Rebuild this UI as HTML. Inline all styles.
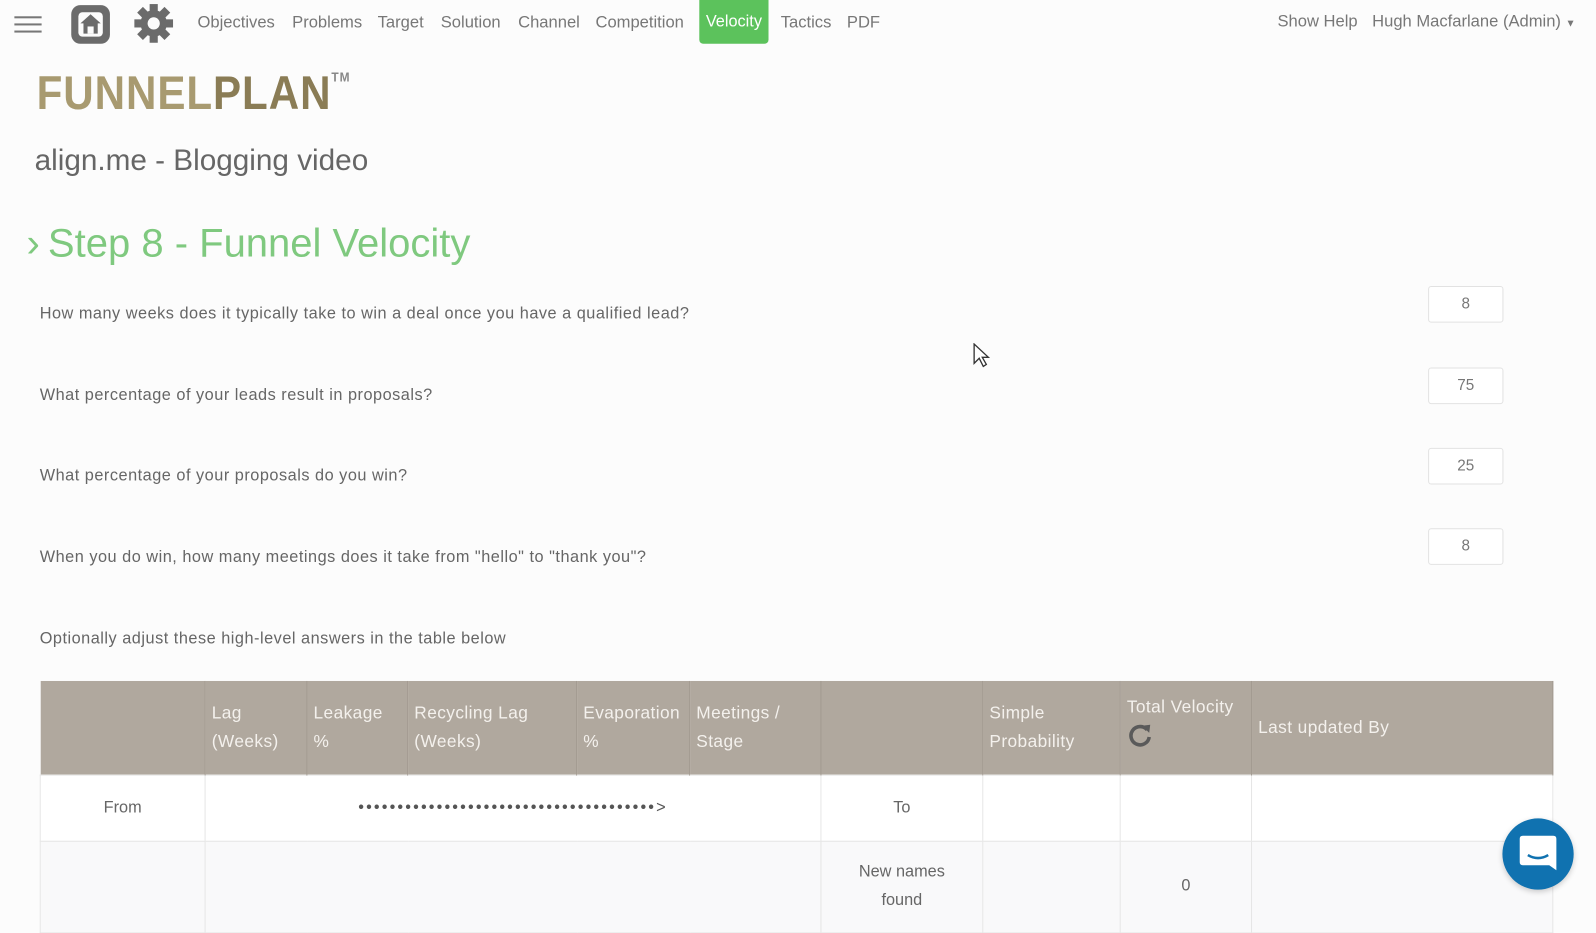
<!DOCTYPE html>
<html><head><meta charset="utf-8"><style>
*{margin:0;padding:0;box-sizing:border-box}
body{width:1596px;height:911px;overflow:hidden;background:#fcfcfc;font-family:"Liberation Sans",sans-serif;color:#666;position:relative}
#w{position:absolute;left:0;top:0;width:1568px;height:895px;transform:scale(1.0179);transform-origin:0 0}
.a{position:absolute;white-space:nowrap}
.nav{font-size:16.3px;color:#777;top:13px}
.q{font-size:16px;letter-spacing:0.5px;color:#666;left:39px}
.box{position:absolute;left:1403px;width:74px;height:36px;border:1px solid #e2e2e2;border-radius:3px;background:#fff;text-align:center;line-height:34px;font-size:15px;color:#777}
table{position:absolute;left:39px;top:669px;border-collapse:collapse;width:1487px}
th{background:#b0a89e;color:#f4f1ed;font-weight:normal;text-align:left;font-size:17px;letter-spacing:0.4px;line-height:28px;padding:0 6px;border-right:1px solid #a39b91;height:92px;vertical-align:middle}
td{border:1px solid #e6e6e6;font-size:16px;color:#666;text-align:center;background:#fff}
</style></head><body><div id="w">
<svg class="a" style="left:14px;top:15px" width="27" height="20"><rect y="1" width="27" height="2" fill="#777"/><rect y="8" width="27" height="2" fill="#777"/><rect y="15" width="27" height="2" fill="#777"/></svg>
<svg class="a" style="left:68px;top:3px" width="42" height="42" viewBox="0 0 42 42"><rect x="2" y="2" width="38" height="38" rx="9" fill="#6b6b6b"/><rect x="9" y="9" width="24" height="24" rx="4" fill="#fcfcfc"/><path d="M21 11 L31 20 H28 V30 H14 V20 H11 Z" fill="#6b6b6b"/><rect x="18" y="23" width="6" height="7" fill="#fcfcfc"/></svg>
<svg class="a" style="left:131px;top:3px" width="40" height="40" viewBox="0 0 40 40"><g fill="#6b6b6b"><circle cx="20" cy="20" r="13"/><rect x="16" y="1" width="8" height="38"/><rect x="1" y="16" width="38" height="8"/><rect x="16" y="1" width="8" height="38" transform="rotate(45 20 20)"/><rect x="16" y="1" width="8" height="38" transform="rotate(-45 20 20)"/></g><circle cx="20" cy="20" r="6" fill="#fcfcfc"/></svg>
<div class="a nav" style="left:194px">Objectives</div>
<div class="a nav" style="left:287px">Problems</div>
<div class="a nav" style="left:371px">Target</div>
<div class="a nav" style="left:433px">Solution</div>
<div class="a nav" style="left:509px">Channel</div>
<div class="a nav" style="left:585px">Competition</div>
<div class="a" style="left:687px;top:0;width:68px;height:43px;background:#5cc25c;border-radius:0 0 4px 4px;color:#fff;font-size:16px;text-align:center;line-height:44px">Velocity</div>
<div class="a nav" style="left:767px">Tactics</div>
<div class="a nav" style="left:832px">PDF</div>
<div class="a nav" style="left:1255px;top:12px;font-size:16.3px">Show Help</div>
<div class="a nav" style="left:1348px;top:12px;font-size:16.3px">Hugh Macfarlane (Admin) <span style="font-size:10px">▼</span></div>
<div class="a" style="left:36px;top:64px;font-size:46px;font-weight:bold;letter-spacing:1px;color:#a89a70;transform:scaleX(0.9);transform-origin:left">FUNNEL<span style="color:#8a7c55">PLAN</span><sup style="font-size:13px;vertical-align:top;position:relative;top:4px;color:#888">TM</sup></div>
<div class="a" style="left:34px;top:142px;font-size:29.2px;color:#666">align.me - Blogging video</div>
<div class="a" style="left:26px;top:217px;font-size:39.3px;color:#7fc97f">›<span style="margin-left:8px">Step 8 - Funnel Velocity</span></div>
<div class="a q" style="top:300px">How many weeks does it typically take to win a deal once you have a qualified lead?</div>
<div class="a q" style="top:380px">What percentage of your leads result in proposals?</div>
<div class="a q" style="top:459px">What percentage of your proposals do you win?</div>
<div class="a q" style="top:539px">When you do win, how many meetings does it take from "hello" to "thank you"?</div>
<div class="a q" style="top:619px">Optionally adjust these high-level answers in the table below</div>
<div class="box" style="top:281px">8</div>
<div class="box" style="top:361px">75</div>
<div class="box" style="top:440px">25</div>
<div class="box" style="top:519px">8</div>
<svg class="a" style="left:955px;top:337px" width="18" height="24"><path d="M2 1 L2 20 L7 15 L11 23 L14 21 L10 14 L16 14 Z" fill="#fff" stroke="#333" stroke-width="1.3"/></svg>
<table>
<tr><th style="width:162px"></th><th style="width:100px">Lag<br>(Weeks)</th><th style="width:99px">Leakage<br>%</th><th style="width:166px">Recycling Lag<br>(Weeks)</th><th style="width:111px">Evaporation<br>%</th><th style="width:129px">Meetings /<br>Stage</th><th style="width:159px"></th><th style="width:135px">Simple<br>Probability</th><th style="width:129px;vertical-align:top;padding-top:12px">Total Velocity<br><svg width="26" height="26" viewBox="0 0 26 26"><path d="M20 8 A9 9 0 1 0 22 15" fill="none" stroke="#5a5a5a" stroke-width="3.5"/><path d="M15 4 L23 3 L22 11 Z" fill="#5a5a5a"/></svg></th><th>Last updated By</th></tr>
<tr style="height:65px"><td>From</td><td colspan="5" style="letter-spacing:2.1px;color:#555;font-size:16px">••••••••••••••••••••••••••••••••••••••&gt;</td><td>To</td><td></td><td></td><td></td></tr>
<tr style="height:90px"><td style="background:#f9f9fa"></td><td colspan="5" style="background:#f9f9fa"></td><td style="background:#f9f9fa;line-height:28px">New names<br>found</td><td style="background:#f9f9fa"></td><td style="background:#f9f9fa">0</td><td style="background:#f9f9fa"></td></tr>
</table>
<div class="a" style="left:1476px;top:804px;width:70px;height:70px;border-radius:50%;background:#1072b0;box-shadow:0 2px 6px rgba(0,0,0,.2)"></div>
<svg class="a" style="left:1491px;top:818px" width="40" height="42" viewBox="0 0 40 42"><path d="M5 3 H35 Q38 3 38 6 V37 L31 32 H5 Q2 32 2 29 V6 Q2 3 5 3 Z" fill="#fff"/><path d="M10 22 Q20 28 30 22" fill="none" stroke="#1072b0" stroke-width="2.5"/></svg>
</div></body></html>
